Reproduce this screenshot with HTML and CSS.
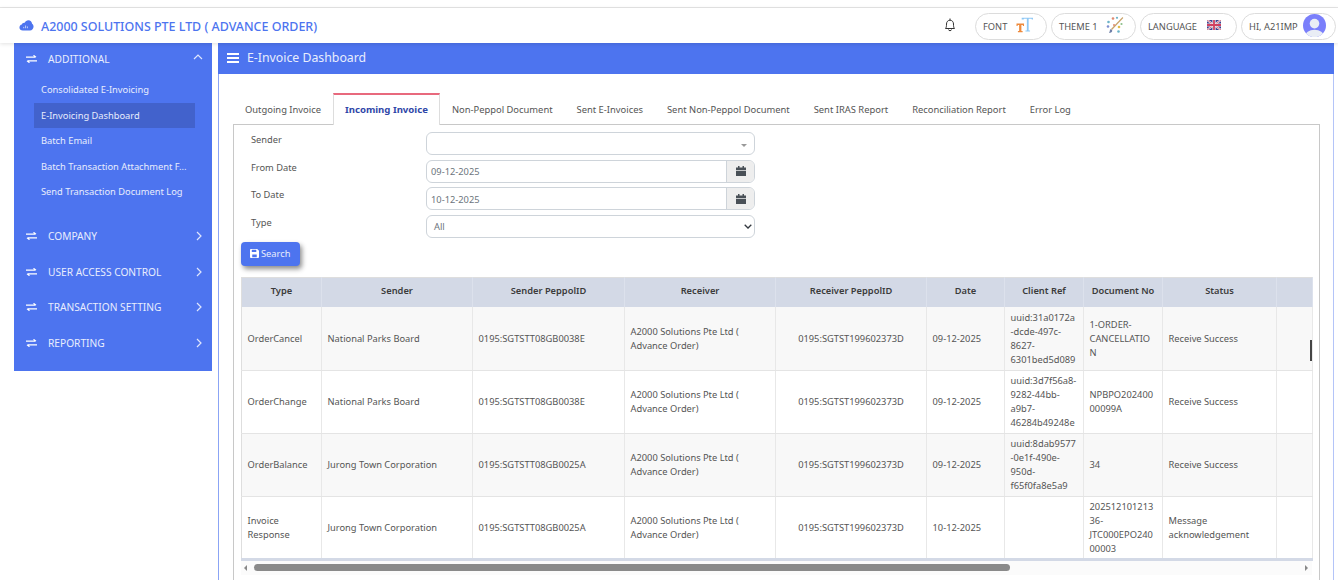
FILE: index.html
```html
<!DOCTYPE html>
<html lang="en">
<head>
<meta charset="utf-8">
<title>E-Invoice Dashboard</title>
<link rel="stylesheet" href="styles.css">
</head>
<body>
<div class="topstrip"></div>
<header class="header">
  <div class="brand">
    <svg class="cloud" viewBox="0 0 16 12"><path d="M4 11.500C1.800 11.500 .3 10 .3 8.200c0-1.600 1.100-2.900 2.600-3.200C3.300 3.500 4.600 2.700 6 3c.8-1.700 2.300-2.700 4-2.700 2.300 0 4 1.700 4.100 3.900 1 .6 1.600 1.700 1.600 3 0 2.400-1.700 4.300-3.900 4.300z" fill="#4d74ef"/><path d="M5 9V7.500M7 9V6M9 9V7" stroke="#fff" stroke-width=".7"/></svg>
    <span>A2000 SOLUTIONS PTE LTD ( ADVANCE ORDER)</span>
  </div>
  <div class="tools">
    <svg class="bell" viewBox="0 0 14 16"><path d="M2.500 11.500c.8-1 1-2 1-4.500 0-2.200 1.500-3.800 3.500-3.800s3.500 1.600 3.500 3.800c0 2.500.2 3.500 1 4.500zM7 1.500v1.700M5.500 12.500c0 1.600 3 1.600 3 0" fill="none" stroke="#333" stroke-width="1"/></svg>
    <div class="pill pill-font"><span>FONT</span>
      <svg class="ic-tt" viewBox="0 0 18 17"><path d="M.5 7h8v2.500h-1L7 8.500H5.700v6.300h1.300v1.500H2v-1.500h1.300V8.500H2l-.5 1h-1z" fill="#ee8a3c"/><path d="M6 .8h12v1.800h-1.200l-.4-.7h-3v12.400h1.500v1.200H10v-1.200h1.500V1.900h-3l-.4.7H6z" fill="#8ec8f5"/></svg>
    </div>
    <div class="pill pill-theme"><span>THEME 1</span>
      <svg class="ic-theme" viewBox="0 0 18 18"><path d="M16.500 1 5 13l1 1L17.300 2z" fill="#c9a36a"/><path d="M3 17c2 0 3.500-1 3.200-2.800L4.800 13C3.500 13.500 4 16 3 17z" fill="#6f7fa8"/><circle cx="2.500" cy="6" r="1.300" fill="#6cb4c8"/><circle cx="7" cy="2.500" r="1.300" fill="#e08a70"/><circle cx="2" cy="10.500" r="1.300" fill="#7e8fd0"/><circle cx="11" cy="1.800" r="1.100" fill="#6cb4c8"/><circle cx="13" cy="11" r="1.300" fill="#e5bd4a"/><circle cx="15.500" cy="8" r="1.100" fill="#8cc08a"/><circle cx="12.500" cy="15.500" r="1.300" fill="#6cb4c8"/><circle cx="8" cy="9" r="1" fill="#e08a70"/></svg>
    </div>
    <div class="pill pill-lang"><span>LANGUAGE</span>
      <svg class="ic-flag" viewBox="0 0 14 10"><rect width="14" height="10" rx="1" fill="#3c3f8f"/><path d="M0 0l14 10M14 0L0 10" stroke="#eee" stroke-width="2"/><path d="M0 0l14 10M14 0L0 10" stroke="#d04060" stroke-width=".7"/><path d="M7 0v10M0 5h14" stroke="#eee" stroke-width="3.200"/><path d="M7 0v10M0 5h14" stroke="#d04060" stroke-width="1.800"/></svg>
    </div>
    <div class="pill pill-user"><span>HI, A21IMP</span>
      <svg class="ic-user" viewBox="0 0 24 24"><defs><clipPath id="avatar"><circle cx="12" cy="12" r="12"/></clipPath></defs><g clip-path="url(#avatar)"><rect width="24" height="24" fill="#7a7ffb"/><circle cx="12" cy="10" r="5" fill="#e9edf5"/><ellipse cx="12" cy="23" rx="10" ry="6.500" fill="#e9edf5"/></g></svg>
    </div>
  </div>
</header>
<div class="layout">
  <aside class="sidebar">
    <div class="nav-item nav-open">
      <svg class="ic-swap" viewBox="0 0 11 8"><path d="M0 2.200h9M7.500.3 10 2.200M11 5.800H2M3.500 7.700 1 5.800" fill="none" stroke="#fff" stroke-width="1.200"/></svg>
      <span class="nav-label">ADDITIONAL</span>
      <svg class="ic-chev-up" viewBox="0 0 10 6"><path d="M1 5l4-4 4 4" fill="none" stroke="#dfe6fd" stroke-width="1.200"/></svg>
    </div>
    <ul class="submenu">
      <li>Consolidated E-Invoicing</li>
      <li class="active">E-Invoicing Dashboard</li>
      <li>Batch Email</li>
      <li>Batch Transaction Attachment F...</li>
      <li>Send Transaction Document Log</li>
    </ul>
    <div class="nav-rest">
      <div class="nav-item">
        <svg class="ic-swap" viewBox="0 0 11 8"><path d="M0 2.200h9M7.500.3 10 2.200M11 5.800H2M3.500 7.700 1 5.800" fill="none" stroke="#fff" stroke-width="1.200"/></svg>
        <span class="nav-label">COMPANY</span>
        <svg class="ic-chev" viewBox="0 0 6 10"><path d="M1 1l4 4-4 4" fill="none" stroke="#dfe6fd" stroke-width="1.200"/></svg>
      </div>
      <div class="nav-item">
        <svg class="ic-swap" viewBox="0 0 11 8"><path d="M0 2.200h9M7.500.3 10 2.200M11 5.800H2M3.500 7.700 1 5.800" fill="none" stroke="#fff" stroke-width="1.200"/></svg>
        <span class="nav-label">USER ACCESS CONTROL</span>
        <svg class="ic-chev" viewBox="0 0 6 10"><path d="M1 1l4 4-4 4" fill="none" stroke="#dfe6fd" stroke-width="1.200"/></svg>
      </div>
      <div class="nav-item">
        <svg class="ic-swap" viewBox="0 0 11 8"><path d="M0 2.200h9M7.500.3 10 2.200M11 5.800H2M3.500 7.700 1 5.800" fill="none" stroke="#fff" stroke-width="1.200"/></svg>
        <span class="nav-label">TRANSACTION SETTING</span>
        <svg class="ic-chev" viewBox="0 0 6 10"><path d="M1 1l4 4-4 4" fill="none" stroke="#dfe6fd" stroke-width="1.200"/></svg>
      </div>
      <div class="nav-item">
        <svg class="ic-swap" viewBox="0 0 11 8"><path d="M0 2.200h9M7.500.3 10 2.200M11 5.800H2M3.500 7.700 1 5.800" fill="none" stroke="#fff" stroke-width="1.200"/></svg>
        <span class="nav-label">REPORTING</span>
        <svg class="ic-chev" viewBox="0 0 6 10"><path d="M1 1l4 4-4 4" fill="none" stroke="#dfe6fd" stroke-width="1.200"/></svg>
      </div>
    </div>
  </aside>
  <main class="main">
    <div class="banner">
      <svg class="ic-bars" viewBox="0 0 12 10"><path d="M0 0h12v2H0zM0 4h12v2H0zM0 8h12v2H0z" fill="#fff"/></svg>
      <span>E-Invoice Dashboard</span>
    </div>
    <div class="content">
      <nav class="tabs">
        <a class="tab">Outgoing Invoice</a>
        <a class="tab tab-active">Incoming Invoice</a>
        <a class="tab">Non-Peppol Document</a>
        <a class="tab">Sent E-Invoices</a>
        <a class="tab">Sent Non-Peppol Document</a>
        <a class="tab">Sent IRAS Report</a>
        <a class="tab">Reconciliation Report</a>
        <a class="tab">Error Log</a>
      </nav>
      <section class="panel">
        <div class="form">
          <div class="form-row">
            <label class="form-label">Sender</label>
            <div class="control control-select"><span class="caret"></span></div>
          </div>
          <div class="form-row">
            <label class="form-label">From Date</label>
            <div class="control control-date"><span class="value">09-12-2025</span>
              <span class="addon"><svg class="ic-cal" viewBox="0 0 10 10"><path d="M0 1.500h2V0h1.500v1.500h3V0H8v1.500h2V4H0zM0 4.700h10V10H0z" fill="#495057"/></svg></span>
            </div>
          </div>
          <div class="form-row">
            <label class="form-label">To Date</label>
            <div class="control control-date"><span class="value">10-12-2025</span>
              <span class="addon"><svg class="ic-cal" viewBox="0 0 10 10"><path d="M0 1.500h2V0h1.500v1.500h3V0H8v1.500h2V4H0zM0 4.700h10V10H0z" fill="#495057"/></svg></span>
            </div>
          </div>
          <div class="form-row">
            <label class="form-label">Type</label>
            <div class="control control-type"><span class="value value-all">All</span>
              <svg class="ic-down" viewBox="0 0 8 5"><path d="M.7.8 4 4 7.300.8" fill="none" stroke="#343a40" stroke-width="1.300"/></svg>
            </div>
          </div>
        </div>
        <button class="btn-search" type="button">
          <svg class="ic-save" viewBox="0 0 10 10"><path d="M0 1a1 1 0 0 1 1-1h7l2 2v7a1 1 0 0 1-1 1H1a1 1 0 0 1-1-1z" fill="#fff"/><path d="M2 .8h5v2.600H2zM2.500 6h5v3.200h-5z" fill="#4d74ef"/></svg>
          Search
        </button>
        <div class="table-wrap">
          <table class="grid">
            <colgroup>
              <col class="c1"><col class="c2"><col class="c3"><col class="c4"><col class="c5"><col class="c6"><col class="c7"><col class="c8"><col class="c9"><col class="c10">
            </colgroup>
            <thead>
              <tr><th>Type</th><th>Sender</th><th>Sender PeppolID</th><th>Receiver</th><th>Receiver PeppolID</th><th>Date</th><th>Client Ref</th><th>Document No</th><th>Status</th><th></th></tr>
            </thead>
            <tbody>
              <tr class="odd"><td>OrderCancel</td><td>National Parks Board</td><td>0195:SGTSTT08GB0038E</td><td>A2000 Solutions Pte Ltd ( Advance Order)</td><td class="center">0195:SGTST199602373D</td><td>09-12-2025</td><td class="nowrap">uuid:31a0172a<br>-dcde-497c-<br>8627-<br>6301bed5d089</td><td class="nowrap">1-ORDER-<br>CANCELLATIO<br>N</td><td>Receive Success</td><td></td></tr>
              <tr><td>OrderChange</td><td>National Parks Board</td><td>0195:SGTSTT08GB0038E</td><td>A2000 Solutions Pte Ltd ( Advance Order)</td><td class="center">0195:SGTST199602373D</td><td>09-12-2025</td><td class="nowrap">uuid:3d7f56a8-<br>9282-44bb-<br>a9b7-<br>46284b49248e</td><td class="nowrap">NPBPO202400<br>00099A</td><td>Receive Success</td><td></td></tr>
              <tr class="odd"><td>OrderBalance</td><td>Jurong Town Corporation</td><td>0195:SGTSTT08GB0025A</td><td>A2000 Solutions Pte Ltd ( Advance Order)</td><td class="center">0195:SGTST199602373D</td><td>09-12-2025</td><td class="nowrap">uuid:8dab9577<br>-0e1f-490e-<br>950d-<br>f65f0fa8e5a9</td><td>34</td><td>Receive Success</td><td></td></tr>
              <tr><td>Invoice Response</td><td>Jurong Town Corporation</td><td>0195:SGTSTT08GB0025A</td><td>A2000 Solutions Pte Ltd ( Advance Order)</td><td class="center">0195:SGTST199602373D</td><td>10-12-2025</td><td></td><td class="nowrap">202512101213<br>36-<br>JTC000EPO240<br>00003</td><td>Message acknowledgement</td><td></td></tr>
            </tbody>
          </table>
          <span class="vthumb"></span>
          <div class="hscroll">
            <span class="arrow-left"></span>
            <span class="hthumb"></span>
            <span class="arrow-right"></span>
          </div>
        </div>
      </section>
    </div>
  </main>
</div>
</body>
</html>
```
FILE: styles.css
```css
* { box-sizing: border-box; }
html, body { margin: 0; padding: 0; }
body {
  width: 1338px;
  height: 580px;
  overflow: hidden;
  background: #fff;
  font-family: "Noto Sans", "Open Sans", sans-serif;
  font-size: 10px;
  color: #495057;
}
.topstrip { height: 8px; border-bottom: 1px solid #e6e6e6; }
.header {
  height: 35px;
  display: flex;
  align-items: center;
  justify-content: space-between;
  position: relative;
  z-index: 2;
  box-shadow: 0 1px 4px rgba(0,0,0,.12);
  background: #fff;
  padding: 0 2px 0 19px;
}
.brand { display: flex; align-items: center; gap: 7px; color: #4d74ef; font-size: 12.450px; font-weight: 500; margin-top: 1px; }
.cloud { width: 15px; height: 11px; margin-top: -2px; }
.tools { display: flex; align-items: center; gap: 4px; margin-top: 1px; }
.bell { width: 14px; height: 16px; margin-right: 14px; margin-top: -3px; }
.pill {
  height: 27px;
  border: 1px solid #dcdcdc;
  border-radius: 14px;
  display: flex;
  align-items: center;
  font-size: 9.300px;
  color: #555;
  padding-left: 7px;
}
.pill-font { width: 72px; gap: 9px; }
.pill-theme { width: 85px; gap: 8px; }
.pill-lang { width: 97px; gap: 10px; }
.pill-user { width: 95px; gap: 5px; }
.ic-tt { width: 17px; height: 16px; margin-top: -2px; }
.ic-theme { width: 18px; height: 18px; margin-top: -2px; }
.ic-flag { width: 14px; height: 10px; margin-top: -2px; }
.ic-user { width: 23px; height: 23px; margin-top: -2px; }

.layout { display: flex; align-items: flex-start; height: 537px; }
.sidebar {
  width: 198px;
  height: 328px;
  margin-left: 14px;
  background: #4d74ef;
  color: #e8edfd;
  flex: none;
}
.nav-item { display: flex; align-items: center; height: 35.500px; padding: 0 10px 0 12px; font-size: 10.200px; }
.nav-open { height: 31px; }
.ic-swap { width: 11px; height: 8px; flex: none; }
.nav-label { margin-left: 11px; flex: 1; white-space: nowrap; }
.ic-chev-up { width: 10px; height: 6px; margin: -3px -1px 0 0; }
.ic-chev { width: 6px; height: 10px; }
.submenu { list-style: none; margin: 3px 0 0; padding: 0 17px 0 20px; }
.submenu li { height: 25.500px; line-height: 25px; padding-left: 7px; font-size: 9.300px; white-space: nowrap; }
.submenu .active { background: #4262cc; }
.nav-rest { margin-top: 14px; }

.main {
  width: 1116px;
  margin-left: 6px;
  height: 537px;
  flex: none;
}
.banner {
  height: 31px;
  background: #4d74ef;
  color: #e8edfd;
  display: flex;
  align-items: center;
  gap: 8px;
  padding: 0 0 2px 9px;
  font-size: 12.300px;
}
.ic-bars { width: 12px; height: 10px; }
.content {
  height: 506px;
  border-left: 1px solid #8ba4f5;
  border-right: 1px solid #b4c4f8;
  padding: 19px 13px 0 14px;
}
.tabs { display: flex; height: 31px; position: relative; z-index: 1; }
.tab {
  display: flex;
  align-items: center;
  justify-content: center;
  height: 31px;
  padding: 1px 12px 0;
  font-size: 9.400px;
  color: #555;
  white-space: nowrap;
}
.tab-active {
  border-top: 2px solid #e8697d;
  border-left: 1px solid #ddd;
  border-right: 1px solid #ddd;
  background: #fff;
  height: 32px;
  font-size: 9.600px;
  font-weight: 700;
  color: #2f46a8;
  padding: 0 11px 2px;
}
.panel { height: 475px; border: 1px solid #c8c8c8; border-bottom: 0; width: 1087px; padding: 7px 7px 0; }
.form { display: flex; flex-direction: column; gap: 4.500px; }
.form-row { display: flex; height: 23px; }
.form-label { width: 185px; padding-left: 10px; font-size: 9.300px; line-height: 15px; color: #555; }
.control {
  width: 329px;
  height: 23px;
  border: 1px solid #ced4da;
  border-radius: 6px;
  display: flex;
  align-items: center;
  justify-content: space-between;
  position: relative;
  font-size: 9.300px;
  color: #6c757d;
  overflow: hidden;
}
.value { padding: 1px 0 0 4px; }
.value-all { padding-left: 7px; }
.caret { position: absolute; right: 7px; top: 11px; border: 3px solid transparent; border-top-color: #999; }
.addon { width: 28px; height: 100%; background: #eee; border-left: 1px solid #ced4da; display: flex; align-items: center; justify-content: center; }
.ic-cal { width: 10px; height: 10px; }
.ic-down { width: 8px; height: 5px; margin-right: 2.500px; }
.btn-search {
  display: flex;
  align-items: center;
  gap: 2px;
  width: 59px;
  height: 24px;
  margin: 4px 0 0;
  padding: 0 0 0 9px;
  border: 0;
  border-radius: 4px;
  background: #4d74ef;
  color: #e8edfd;
  font: inherit;
  font-size: 9.300px;
  box-shadow: 2px 3px 5px rgba(0,0,0,.45);
}
.ic-save { width: 9px; height: 9px; }
.table-wrap { position: relative; width: 1071px; margin-top: 11px; }
.grid {
  width: 1071px;
  table-layout: fixed;
  border-collapse: collapse;
  border-top: 1px solid #dedede;
  border-left: 1px solid #dedede;
  border-right: 1px solid #dedede;
  border-bottom: 3px solid #d3d9e6;
}
.c1 { width: 80px; } .c2 { width: 151px; } .c3 { width: 152px; } .c4 { width: 151px; } .c5 { width: 151px; }
.c6 { width: 78px; } .c7 { width: 79px; } .c8 { width: 79px; } .c9 { width: 114px; } .c10 { width: 36px; }
.grid th {
  height: 30px;
  background: #d3d9e6;
  font-size: 9.300px;
  font-weight: 600;
  color: #3b3b3b;
  text-align: center;
  padding: 0 0 4px;
  border-right: 1px solid #dce1ec;
}
.grid td {
  height: 63px;
  padding: 1px 5.500px 0;
  font-size: 9.300px;
  line-height: 14px;
  color: #555;
  border-right: 1px solid #e8e8e8;
  border-bottom: 1px solid #e4e4e4;
  vertical-align: middle;
  overflow-wrap: anywhere;
}
.grid .center { text-align: center; }
.grid .nowrap { white-space: nowrap; overflow: hidden; }
.grid tbody tr:last-child td { border-bottom: 0; }
.grid .odd td { background: #f8f8f8; }
.vthumb { position: absolute; right: 0; top: 63px; width: 2px; height: 21px; background: #444; }
.hscroll { position: relative; height: 14px; background: #fbfbfb; display: flex; align-items: center; }
.arrow-left { position: absolute; left: 3px; top: 4px; border: 3px solid transparent; border-right-color: #888; border-left: 0; }
.arrow-right { position: absolute; right: 4px; top: 4px; border: 3px solid transparent; border-left-color: #888; border-right: 0; }
.hthumb { position: absolute; left: 13px; top: 3px; width: 756px; height: 7px; background: #8a8a8a; border-radius: 4px; }
```
